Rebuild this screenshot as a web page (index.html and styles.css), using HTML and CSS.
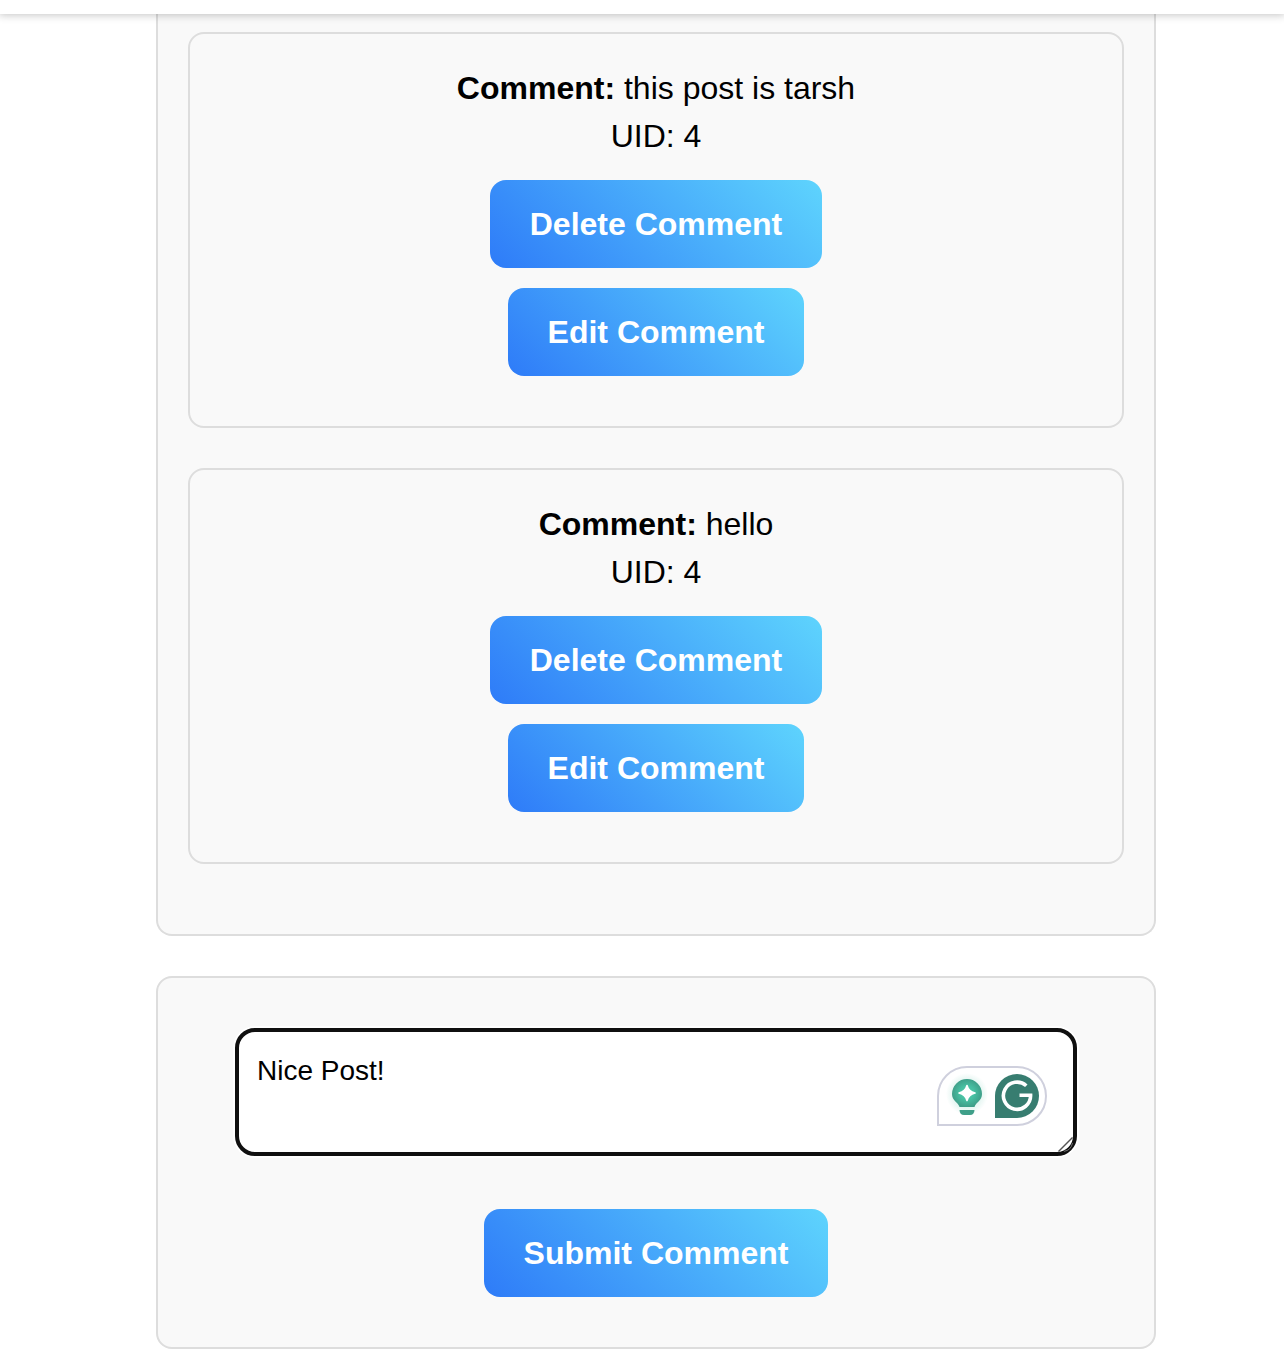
FILE: index.html
```html
<!DOCTYPE html>
<html lang="en">
<head>
<meta charset="utf-8">
<title>Comments</title>
<link rel="stylesheet" href="styles.css">
</head>
<body>
<header class="topbar"></header>
<main class="content">
  <section class="panel comments">
    <article class="comment">
      <p class="line"><strong>Comment:</strong> this post is tarsh</p>
      <p class="line">UID: 4</p>
      <button class="button">Delete Comment</button>
      <button class="button">Edit Comment</button>
    </article>
    <article class="comment">
      <p class="line"><strong>Comment:</strong> hello</p>
      <p class="line">UID: 4</p>
      <button class="button">Delete Comment</button>
      <button class="button">Edit Comment</button>
    </article>
  </section>
  <section class="panel form">
    <div class="field">
      <textarea class="input" aria-label="Comment">Nice Post!</textarea>
      <svg class="grip" viewBox="0 0 18 18" aria-hidden="true">
        <path d="M1.500 15.500 15.500 1.500" fill="none" stroke="#555" stroke-width="1.400"/>
        <path d="M7 15.300Q14 14.500 15.500 7" fill="none" stroke="#888" stroke-width=".8"/>
      </svg>
      <svg class="assistant" viewBox="0 0 110 60" aria-hidden="true">
        <defs>
          <radialGradient id="bulb">
            <stop offset="0" stop-color="#52cdb0"/>
            <stop offset=".5" stop-color="#48bea1"/>
            <stop offset="1" stop-color="#3f9f89"/>
          </radialGradient>
          <radialGradient id="glow">
            <stop offset=".65" stop-color="#48bea1" stop-opacity=".15"/>
            <stop offset="1" stop-color="#48bea1" stop-opacity="0"/>
          </radialGradient>
        </defs>
        <path d="M1 59V30A29 29 0 0 1 30 1H80A29 29 0 0 1 80 59Z" fill="#fff" stroke="#cfd0dd" stroke-width="2"/>
        <circle cx="30" cy="28" r="21" fill="url(#glow)"/>
        <path d="M22.500 41C21 36 15 35 15 28A15 15 0 0 1 45 28C45 35 39 36 37.500 41Z" fill="url(#bulb)"/>
        <path d="M30 19.500Q31.500 25.500 38 27Q31.500 28.500 30 34.500Q28.500 28.500 22 27Q28.500 25.500 30 19.500Z" fill="#fff" stroke="#fff" stroke-width="1.600" stroke-linejoin="round"/>
        <path d="M22.500 44H37.500Q37.300 49 33 49H27Q22.700 49 22.500 44Z" fill="#3f9f89"/>
        <path d="M58 52V30A22 22 0 1 1 80 52Z" fill="#377d70"/>
        <path d="M89.300 19.800A13.600 13.600 0 1 0 93.600 29.300H82.500" fill="none" stroke="#fff" stroke-width="3.600"/>
      </svg>
    </div>
    <button class="button">Submit Comment</button>
  </section>
</main>
</body>
</html>
```
FILE: styles.css
```css
* {
  box-sizing: border-box;
}

body {
  margin: 0;
  height: 1356px;
  overflow: hidden;
  background: #fff;
  color: #000;
  font-family: "Liberation Sans", Arial, sans-serif;
  font-size: 32px;
  line-height: 48px;
}

.topbar {
  position: relative;
  z-index: 1;
  height: 14px;
  background: #fff;
  box-shadow: 0 0 8px 1px rgba(0, 0, 0, 0.24);
}

.content {
  display: flex;
  flex-direction: column;
  gap: 40px;
  width: 1000px;
  margin-left: 156px;
}

.panel {
  border: 2px solid #ddd;
  border-radius: 16px;
  background: #f9f9f9;
}

.comments {
  display: flex;
  flex-direction: column;
  gap: 40px;
  padding: 18px 30px 70px;
  border-top: 0;
  border-top-left-radius: 0;
  border-top-right-radius: 0;
}

.comment {
  display: flex;
  flex-direction: column;
  align-items: center;
  padding: 30px 30px 50px;
  border: 2px solid #ddd;
  border-radius: 16px;
}

.line {
  margin: 0;
}

.button {
  height: 88px;
  margin: 20px 0 0;
  padding: 0 40px;
  border: 0;
  border-radius: 16px;
  background: linear-gradient(45deg, #2e7bf8, #5ed4fd);
  color: #fff;
  font: bold 32px/48px "Liberation Sans", Arial, sans-serif;
  white-space: nowrap;
}

.form {
  display: flex;
  flex-direction: column;
  align-items: center;
  gap: 33px;
  height: 373px;
  padding-top: 50px;
}

.field {
  position: relative;
  width: 842px;
  height: 128px;
}

.input {
  display: block;
  width: 100%;
  height: 100%;
  padding: 23px 18px;
  border: 4px solid #101010;
  border-radius: 20px;
  outline: 0;
  box-shadow: 0 0 0 2px #fff;
  background: #fff;
  color: #000;
  font: 28px/32px "Liberation Sans", Arial, sans-serif;
  resize: none;
  overflow: hidden;
}

.grip {
  position: absolute;
  right: 2px;
  bottom: 2px;
  width: 18px;
  height: 18px;
}

.assistant {
  position: absolute;
  right: 30px;
  bottom: 30px;
  width: 110px;
  height: 60px;
}
```
